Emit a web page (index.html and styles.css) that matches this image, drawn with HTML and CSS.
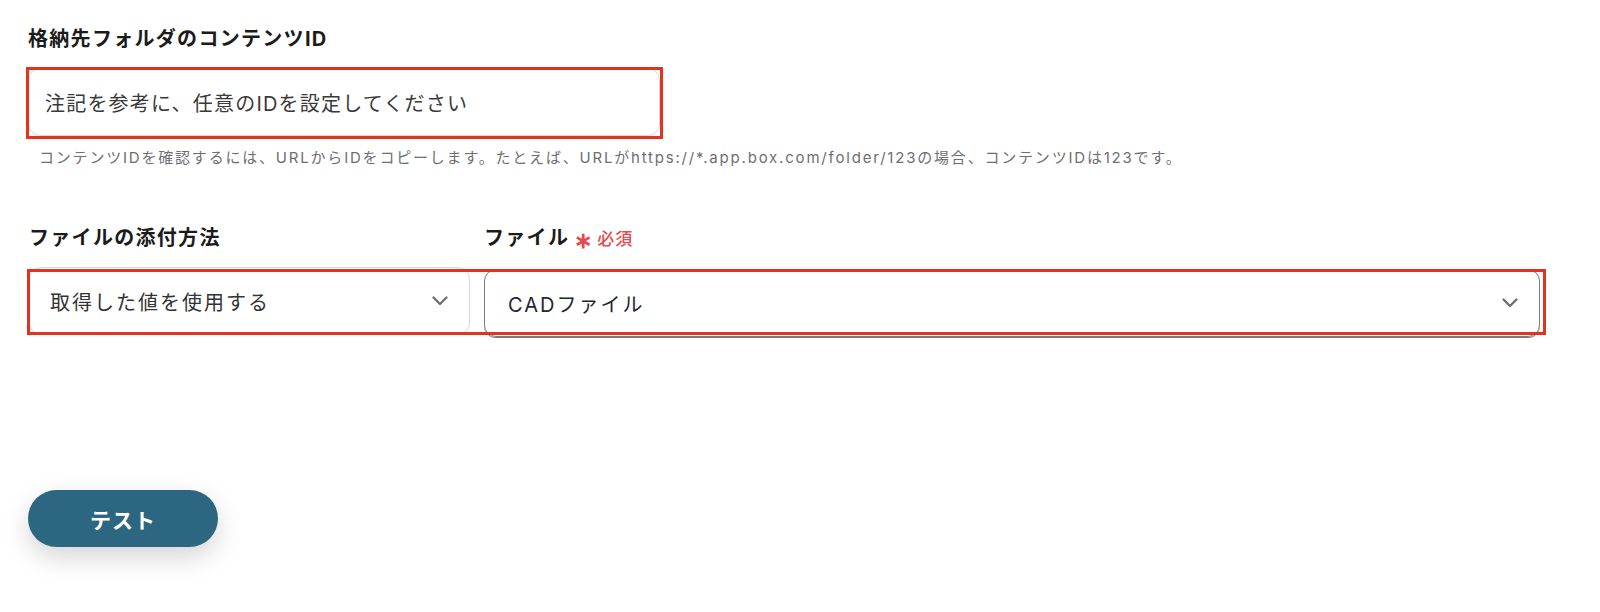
FILE: index.html
```html
<!DOCTYPE html>
<html lang="ja">
<head>
    <meta charset="utf-8">
    <title>Box ファイルアップロード設定</title>
    <link rel="stylesheet" href="styles.css">
</head>
<body>
    <div class="form">
        <div class="field">
            <label class="label">格納先フォルダのコンテンツID</label>
            <div class="marked marked-input">
                <div class="text-input">注記を参考に、任意のIDを設定してください</div>
            </div>
            <p class="hint">コンテンツIDを確認するには、URLからIDをコピーします。たとえば、URLがhttps://*.app.box.com/folder/123の場合、コンテンツIDは123です。</p>
        </div>

        <div class="row marked marked-row">
            <div class="col">
                <label class="label">ファイルの添付方法</label>
                <div class="select">
                    <span>取得した値を使用する</span>
                    <svg class="chevron" width="16" height="10" viewBox="0 0 16 10"><path d="M1.5 1.5 L8 8 L14.5 1.5" fill="none" stroke="#6b6b6b" stroke-width="2.2" stroke-linecap="round" stroke-linejoin="round"/></svg>
                </div>
            </div>
            <div class="col">
                <label class="label">ファイル<span class="required"><span class="star">∗</span>必須</span></label>
                <div class="select select-active">
                    <span>CADファイル</span>
                    <svg class="chevron" width="16" height="10" viewBox="0 0 16 10"><path d="M1.5 1.5 L8 8 L14.5 1.5" fill="none" stroke="#6b6b6b" stroke-width="2.2" stroke-linecap="round" stroke-linejoin="round"/></svg>
                </div>
            </div>
        </div>

        <button class="test-btn">テスト</button>
    </div>
</body>
</html>
```

FILE: styles.css
```css
body {
    margin: 0;
    background: #fff;
    font-family: Inter, "Noto Sans CJK JP", sans-serif;
    color: #1a1a1a;
}
.form {
    padding: 25px 60px 40px 28px;
}
.label {
    display: block;
    font-size: 20px;
    line-height: 28px;
    font-weight: 700;
    letter-spacing: 1.3px;
    color: #1b1b1b;
}
.marked {
    position: relative;
}
.marked::after {
    content: '';
    position: absolute;
    border: 3px solid #e4321f;
    pointer-events: none;
}
.marked-input {
    width: 632px;
    margin-top: 15px;
}
.marked-input::after {
    inset: -1px -3px -3px -2px;
}
.text-input {
    height: 68px;
    box-sizing: border-box;
    border: 1px solid #d3d7de;
    border-radius: 12px;
    padding: 0 16px;
    display: flex;
    align-items: center;
    font-size: 20px;
    letter-spacing: 1.2px;
    color: #3a3a3a;
}
.hint {
    margin: 12px 0 0 11px;
    font-size: 15px;
    line-height: 20px;
    letter-spacing: 1.8px;
    color: #6e6e73;
}
.row {
    display: grid;
    grid-template-columns: 441px 1fr;
    column-gap: 14px;
    margin-top: 56px;
    margin-left: 1px;
}
.marked-row::after {
    top: 45px;
    bottom: 2px;
    left: -2px;
    right: -6px;
}
.col .label {
    margin-bottom: 15px;
}
.required {
    margin-left: 5px;
    color: #e5484d;
    font-size: 17px;
    font-weight: 500;
    letter-spacing: 1px;
}
.star {
    font-size: 22px;
    font-weight: 700;
    margin-right: 4px;
    vertical-align: -3px;
}
.select {
    height: 68px;
    box-sizing: border-box;
    border: 1px solid #d3d7de;
    border-radius: 12px;
    display: flex;
    align-items: center;
    justify-content: space-between;
    padding: 0 21px 0 20px;
    font-size: 20px;
    letter-spacing: 2px;
    color: #333;
}
.select-active {
    border-color: #7a7a7a;
    box-shadow: 0 1px 0 #7a7a7a;
    padding-left: 23px;
    color: #1f2633;
}
.chevron {
    display: block;
    flex: none;
}
.test-btn {
    display: block;
    margin-top: 153px;
    width: 190px;
    height: 57px;
    border: none;
    border-radius: 29px;
    background-color: #2d6680;
    color: #fff;
    font-family: Inter, "Noto Sans CJK JP", sans-serif;
    font-size: 21px;
    font-weight: 700;
    letter-spacing: 1px;
    box-shadow: 0 10px 26px rgba(0, 0, 0, 0.17);
    cursor: pointer;
}
```
